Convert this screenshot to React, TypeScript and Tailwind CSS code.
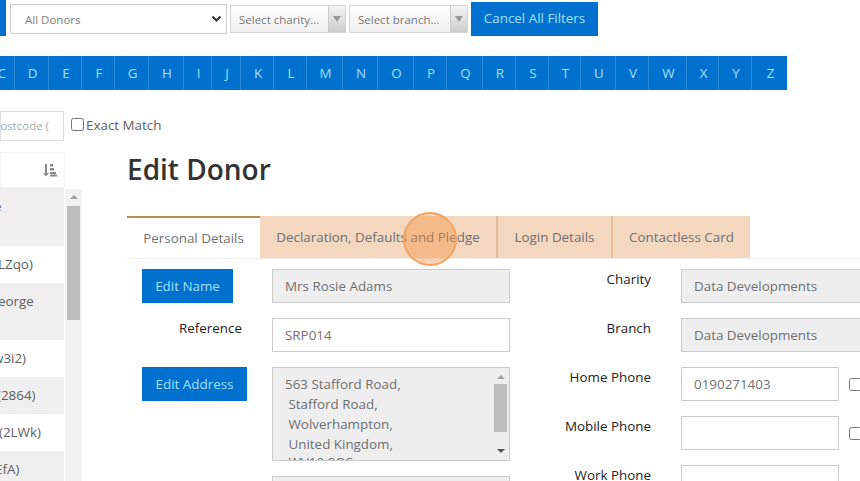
const sans = "font-['Open_Sans',sans-serif]";

const letters: [string, string][] = [
  ["D", "w-[34px]"], ["E", "w-[33px]"], ["F", "w-[33px]"], ["G", "w-[34px]"], ["H", "w-[35px]"], ["I", "w-[28px]"],
  ["J", "w-[29px]"], ["K", "w-[33px]"], ["L", "w-[33px]"], ["M", "w-[36px]"], ["N", "w-[35px]"], ["O", "w-[36px]"],
  ["P", "w-[33px]"], ["Q", "w-[36px]"], ["R", "w-[33px]"], ["S", "w-[33px]"], ["T", "w-[32px]"], ["U", "w-[35px]"],
  ["V", "w-[33px]"], ["W", "w-[38px]"], ["X", "w-[32px]"], ["Y", "w-[33px]"], ["Z", "w-[35px]"],
];

function SelectBox({ label, width }: { label: string; width: string }) {
  return (
    <div className={`flex h-[28px] items-stretch border border-[#d5d5d5] bg-gradient-to-b from-white to-[#f0f0f0] ${width}`}>
      <span className="flex-1 truncate pl-2 text-[11.5px] leading-[27px] text-[#777]">{label}</span>
      <span className="flex w-[17px] items-center justify-center border-l border-[#ccc] bg-gradient-to-b from-[#f5f5f5] to-[#ccc]">
        <span className="h-0 w-0 border-x-[4px] border-t-[6px] border-x-transparent border-t-[#999]" />
      </span>
    </div>
  );
}

function Field({ value = "", disabled = false, width = "w-[238px]" }: { value?: string; disabled?: boolean; width?: string }) {
  return (
    <div className={`h-[34px] shrink-0 border border-[#ccc] px-[12px] text-[13.4px] leading-[32px] text-[#707070] ${disabled ? "bg-[#eee]" : "bg-white"} ${width}`}>
      {value}
    </div>
  );
}

function Label({ children, width }: { children: string; width: string }) {
  return <div className={`shrink-0 text-right text-[13.4px] leading-[20px] text-[#222] ${width}`}>{children}</div>;
}

function ListRow({ text, tall = false, grey = false, shift = "" }: { text: string; tall?: boolean; grey?: boolean; shift?: string }) {
  return (
    <div className={`overflow-hidden pt-[8px] text-[13.4px] leading-[20px] text-[#606060] ${tall ? "h-[57px]" : "h-[37px]"} ${grey ? "bg-[#efefef]" : "bg-white"}`}>
      <div className={`whitespace-nowrap ${shift}`}>{text}</div>
    </div>
  );
}

function Tab({ label, active = false, width }: { label: string; active?: boolean; width: string }) {
  return (
    <div className={`h-[42px] shrink-0 text-center text-[13.4px] leading-[40px] text-[#707070] ${active ? "border-t-2 border-[#b98c55] bg-white" : "border-r-2 border-[#e3bd9b] bg-[#f3d7bf] pt-[1px]"} ${width}`}>
      {label}
    </div>
  );
}

export default function App() {
  return (
    <div className={`${sans} relative h-[481px] w-[860px] overflow-hidden bg-white`}>
      {/* filter bar */}
      <div className="flex h-[56px] items-start">
        <div className="h-[36px] w-[6px] shrink-0 bg-[#0071ce]" />
        <div className="ml-[4px] mt-[4px] flex h-[30px] w-[217px] items-center justify-between border border-[#ccc] pl-[14px] pr-[4px] text-[11.5px] text-[#808080]">
          <span className="translate-y-[0.5px]">All Donors</span>
          <svg width="11" height="8" viewBox="0 0 11 8"><path d="M1.5 1.5 5.5 5.5 9.5 1.5" fill="none" stroke="#333" strokeWidth="2" /></svg>
        </div>
        <div className="ml-[3px] mt-[5px]"><SelectBox label="Select charity..." width="w-[116px]" /></div>
        <div className="ml-[3px] mt-[5px]"><SelectBox label="Select branch..." width="w-[119px]" /></div>
        <div className="ml-[3px] mt-[2px] flex h-[34px] w-[127px] items-center justify-center bg-[#0071ce] pb-[1px] text-[13.4px] text-[#a5e0f8]">Cancel All Filters</div>
      </div>

      {/* alphabet */}
      <div className="flex h-[34px] w-[787px] overflow-hidden bg-[#0071ce]">
        <div className="flex h-full w-[15px] shrink-0 items-center justify-end border-r border-[#2a8ad8] pr-[8px] text-[13.4px] text-[#a5e0f8]">C</div>
        {letters.map(([l, w]) => (
          <div key={l} className={`flex h-full shrink-0 items-center justify-center border-r border-[#2a8ad8] pl-[2px] text-[13.4px] text-[#a5e0f8] last:border-r-0 ${w}`}>{l}</div>
        ))}
      </div>

      {/* search row */}
      <div className="mt-[21px] flex h-[30px] items-center">
        <div className="flex h-[30px] w-[64px] shrink-0 items-center justify-end overflow-hidden border border-[#ddd] pr-[14px] text-[11.5px] whitespace-nowrap text-[#aaa]">ostcode (</div>
        <input type="checkbox" readOnly className="ml-[7px] h-[13px] w-[13px] -translate-y-[2px]" />
        <span className="ml-[2px] -translate-y-[1.5px] text-[13.4px] text-[#606060]">Exact Match</span>
      </div>

      <div className="mt-[11px] flex">
        {/* donor list */}
        <div className="relative h-[329px] w-[82px] shrink-0">
          <div className="flex h-[36px] w-[65px] items-center justify-end border border-[#f3f3f3] pr-[7px]">
            <svg width="14" height="14" viewBox="0 0 14 14" fill="#888">
              <path d="M2 1h2v9h2l-3 3.5L0 10h2z" />
              <rect x="7" y="1" width="3" height="2.5" />
              <rect x="7" y="5" width="4" height="2.5" />
              <rect x="7" y="9" width="6" height="2" />
              <rect x="7" y="11.5" width="7" height="2" />
            </svg>
          </div>
          <div className="w-[64px]">
            <div className="h-[58px] overflow-hidden bg-[#efefef] pt-[8px] text-[13.4px] leading-[20px] text-[#606060]"><div className="-ml-[6px]">e</div></div>
            <ListRow text="LZqo)" shift="-ml-[2px]" />
            <ListRow text="eorge" tall grey shift="-ml-[2px]" />
            <ListRow text="w3i2)" shift="-ml-[7px]" />
            <ListRow text="(2864)" grey shift="-ml-[3px]" />
            <ListRow text="(2LWk)" shift="-ml-[1px]" />
            <ListRow text="EfA)" grey shift="-ml-[5px]" />
          </div>
          <div className="absolute top-[37px] left-[65px] flex h-[292px] w-[17px] flex-col items-center bg-[#f1f1f1]">
            <span className="mt-[6px] h-0 w-0 border-x-[4px] border-b-[4px] border-x-transparent border-b-[#a3a3a3]" />
            <span className="mt-[7px] h-[114px] w-[13px] bg-[#bdbdbd]" />
          </div>
        </div>

        {/* main content */}
        <div className="ml-[45px] flex-1">
          <h1 className="-mt-[4px] h-[68px] text-[28px] leading-[42px] font-semibold text-[#333]">Edit Donor</h1>
          <div className="flex border-b border-[#eee]">
            <Tab label="Personal Details" active width="w-[133px]" />
            <Tab label="Declaration, Defaults and Pledge" width="w-[238px]" />
            <Tab label="Login Details" width="w-[115px]" />
            <div className="h-[42px] w-[137px] bg-[#f3d7bf] pt-[1px] text-center text-[13.4px] leading-[40px] text-[#707070]">Contactless Card</div>
          </div>

          <div className="mt-[10px] flex pl-[15px]">
            <div className="flex w-[397px] shrink-0 flex-col gap-[15px]">
              <div className="flex">
                <div className="flex h-[34px] w-[91px] items-center justify-center bg-[#0071ce] text-[13.4px] text-[#a5e0f8]">Edit Name</div>
                <div className="ml-[39px]"><Field value="Mrs Rosie Adams" disabled /></div>
              </div>
              <div className="flex">
                <Label width="w-[100px]">Reference</Label>
                <div className="ml-[30px]"><Field value="SRP014" /></div>
              </div>
              <div className="flex">
                <div className="flex h-[34px] w-[105px] items-center justify-center bg-[#0071ce] text-[13.4px] text-[#a5e0f8]">Edit Address</div>
                <div className="relative ml-[25px] h-[94px] w-[238px] overflow-hidden border border-[#ccc] bg-[#eee] pt-[6px] pl-[12px] text-[13.4px] leading-[20px] whitespace-pre text-[#707070]">
                  {"563 Stafford Road,\n Stafford Road,\n Wolverhampton,\n United Kingdom,\n"}
                  <span className="relative -top-[2px]">{" WV10 8QS"}</span>
                  <div className="absolute top-0 right-[2px] flex h-full w-[13px] flex-col items-center justify-between py-[7px]">
                    <span className="h-0 w-0 border-x-[4px] border-b-[4px] border-x-transparent border-b-[#a3a3a3]" />
                    <span className="-mt-[1px] mb-[11px] h-[48px] w-[13px] bg-[#bdbdbd]" />
                    <span className="h-0 w-0 border-x-[4px] border-t-[4px] border-x-transparent border-t-[#555]" />
                  </div>
                </div>
              </div>
              <div className="flex">
                <Label width="w-[100px]">HMRC Address</Label>
                <div className="ml-[30px]"><Field disabled /></div>
              </div>
            </div>

            <div className="flex flex-col gap-[15px]">
              <div className="flex"><Label width="w-[112px]">Charity</Label><div className="ml-[30px]"><Field value="Data Developments" disabled width="w-[200px]" /></div></div>
              <div className="flex"><Label width="w-[112px]">Branch</Label><div className="ml-[30px]"><Field value="Data Developments" disabled width="w-[200px]" /></div></div>
              <div className="flex"><Label width="w-[112px]">Home Phone</Label><div className="ml-[30px]"><Field value="0190271403" width="w-[158px]" /></div><input type="checkbox" readOnly className="mt-[11px] ml-[10px] h-[13px] w-[13px] shrink-0" /></div>
              <div className="flex"><Label width="w-[112px]">Mobile Phone</Label><div className="ml-[30px]"><Field width="w-[158px]" /></div><input type="checkbox" readOnly className="mt-[11px] ml-[10px] h-[13px] w-[13px] shrink-0" /></div>
              <div className="flex"><Label width="w-[112px]">Work Phone</Label><div className="ml-[30px]"><Field width="w-[158px]" /></div></div>
            </div>
          </div>
        </div>
      </div>

      {/* click highlight */}
      <div className="absolute top-[212px] left-[403px] h-[54px] w-[54px] rounded-full border-2 border-[#f5a35f] bg-[#f58f3c]/40" />
    </div>
  );
}
